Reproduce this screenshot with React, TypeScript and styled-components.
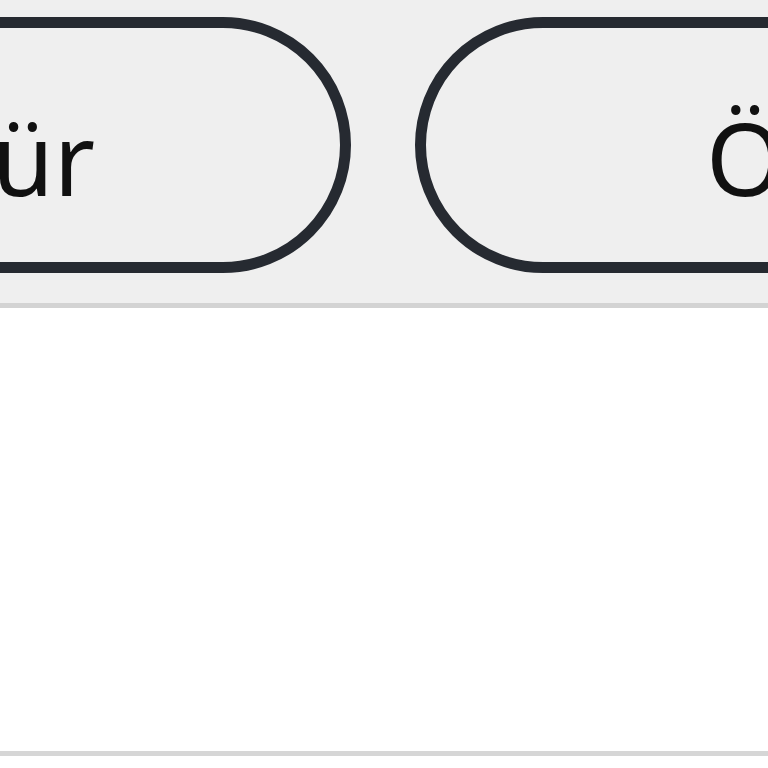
import React from "react";
import styled, { createGlobalStyle } from "styled-components";

const Global = createGlobalStyle`
  html, body { margin: 0; padding: 0; background: #ffffff; overflow: hidden; }
  body { font-family: "Noto Sans", "Open Sans", sans-serif; }
`;

const Page = styled.div`
  width: 768px;
  height: 768px;
  display: flex;
  flex-direction: column;
  overflow: hidden;
  background: #ffffff;
`;

const Toolbar = styled.div`
  flex: 0 0 auto;
  height: 303px;
  box-sizing: border-box;
  padding-top: 17px;
  background: #efefef;
  border-bottom: 5px solid #d3d3d3;
  display: flex;
  gap: 64px;
  overflow: hidden;
  height: 308px;
`;

const PillButton = styled.button<{ $align: "start" | "end"; $pad: number; $offset?: number }>`
  flex: 0 0 auto;
  width: 600px;
  height: 256px;
  margin-left: ${(p) => p.$offset ?? 0}px;
  box-sizing: border-box;
  border: 11px solid #262a31;
  border-radius: 128px;
  background: #efefef;
  color: #111111;
  font-family: "Noto Sans", "Open Sans", sans-serif;
  font-size: 100px;
  line-height: normal;
  display: flex;
  align-items: center;
  justify-content: ${(p) => (p.$align === "end" ? "flex-end" : "flex-start")};
  padding: 24px 0 0 0;
  ${(p) => (p.$align === "end" ? `padding-right: ${p.$pad}px;` : `padding-left: ${p.$pad}px;`)}
  white-space: nowrap;
  cursor: pointer;
`;

const Content = styled.div`
  flex: 0 0 auto;
  height: 443px;
  background: #ffffff;
`;

const Footer = styled.div`
  flex: 1 1 auto;
  background: #ffffff;
  border-top: 5px solid #d6d6d6;
`;

export default function App() {
  return (
    <Page>
      <Global />
      <Toolbar>
        <PillButton $align="end" $pad={245} $offset={-249}>
          ür
        </PillButton>
        <PillButton $align="start" $pad={280}>
          Ö
        </PillButton>
      </Toolbar>
      <Content />
      <Footer />
    </Page>
  );
}
